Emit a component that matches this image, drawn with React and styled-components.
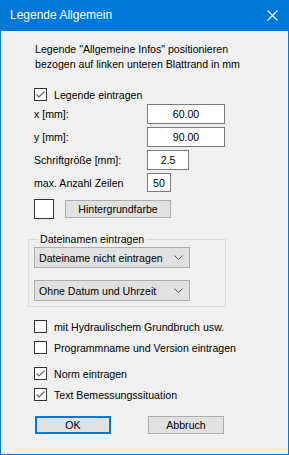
import React, { useState } from 'react';
import styled, { createGlobalStyle } from 'styled-components';

const GlobalStyle = createGlobalStyle`
    html, body {
        margin: 0;
        padding: 0;
        background: #f0f0f0;
    }
    * {
        box-sizing: border-box;
    }
`;

const Window = styled.div`
    width: 289px;
    height: 455px;
    border: 1px solid #0078d7;
    border-top: none;
    background: #f0f0f0;
    font-family: "Liberation Sans", Arial, sans-serif;
    font-size: 10.6px;
    color: #000;
    display: flex;
    flex-direction: column;
`;

const TitleBar = styled.div`
    height: 31px;
    margin: 0 -1px;
    background: #0078d7;
    color: #fff;
    display: flex;
    align-items: center;
    justify-content: space-between;
    padding: 0 10px 1px 10px;
    font-size: 12px;
`;

const CloseBtn = styled.svg`
    width: 11px;
    height: 11px;
    margin-right: 1px;
`;

const Body = styled.div`
    padding: 11px 0 0 33px;
    display: flex;
    flex-direction: column;
    align-items: flex-start;
`;

const Intro = styled.div`
    line-height: 15px;
    padding-left: 1px;
`;

const Row = styled.div`
    display: flex;
    align-items: center;
    height: ${(p) => p.$h || 20}px;
    margin-top: ${(p) => p.$mt || 0}px;
`;

const Label = styled.span`
    width: 113px;
`;

const Field = styled.input`
    width: ${(p) => p.$w}px;
    height: ${(p) => p.$h || 20}px;
    border: 1px solid #7a7a7a;
    background: #fff;
    font: inherit;
    color: #000;
    text-align: center;
    padding: 0;
    outline: none;
`;

const CheckLabel = styled.label`
    display: flex;
    align-items: center;
    gap: 7px;
    height: 13px;
    margin-top: ${(p) => p.$mt || 0}px;
`;

const Box = styled.span`
    width: 13px;
    height: 13px;
    border: 1px solid #333;
    background: #fff;
    display: flex;
    align-items: center;
    justify-content: center;
`;

const Swatch = styled.div`
    width: 20px;
    height: 20px;
    border: 1px solid #333;
    background: #fff;
`;

const Button = styled.button`
    width: ${(p) => p.$w}px;
    height: ${(p) => p.$h || 18}px;
    margin-left: ${(p) => p.$ml || 0}px;
    background: #e1e1e1;
    border: ${(p) => (p.$default ? '2px solid #0078d7' : '1px solid #adadad')};
    font: inherit;
    color: #000;
    padding: 0;
`;

const Group = styled.div`
    position: relative;
    margin: 20px 0 0 -6px;
    width: 198px;
    border: 1px solid #dcdcdc;
    padding: 7px 0 5px 5px;
    display: flex;
    flex-direction: column;
    gap: 12px;
`;

const GroupTitle = styled.span`
    position: absolute;
    top: -8px;
    left: 9px;
    background: #f0f0f0;
    padding: 0 2px;
    line-height: 14px;
`;

const Select = styled.div`
    width: 156px;
    height: 21px;
    background: #e1e1e1;
    border: 1px solid #adadad;
    display: flex;
    align-items: center;
    justify-content: space-between;
    padding: 0 6px 0 4px;
`;

const ButtonRow = styled.div`
    display: flex;
    margin-top: 15px;
    margin-left: 1px;
`;

function Check({ checked, label, mt }) {
    return (
        <CheckLabel $mt={mt}>
            <Box>
                {checked && (
                    <svg width="11" height="11" viewBox="0 0 11 11">
                        <path d="M1.5 5.5 L4 8 L9.5 2.5" fill="none" stroke="#666" strokeWidth="1.2" />
                    </svg>
                )}
            </Box>
            <span>{label}</span>
        </CheckLabel>
    );
}

function Dropdown({ text }) {
    return (
        <Select>
            <span>{text}</span>
            <svg width="9" height="6" viewBox="0 0 9 6">
                <path d="M0.5 0.5 L4.5 4.5 L8.5 0.5" fill="none" stroke="#555" strokeWidth="1" />
            </svg>
        </Select>
    );
}

export default function App() {
    const [x, setX] = useState('60.00');
    const [y, setY] = useState('90.00');
    const [size, setSize] = useState('2.5');
    const [rows, setRows] = useState('50');

    return (
        <Window>
            <GlobalStyle />
            <TitleBar>
                <span>Legende Allgemein</span>
                <CloseBtn viewBox="0 0 11 11">
                    <path d="M0.5 0.5 L10.5 10.5 M10.5 0.5 L0.5 10.5" stroke="#fff" strokeWidth="1.1" />
                </CloseBtn>
            </TitleBar>
            <Body>
                <Intro>
                    Legende "Allgemeine Infos" positionieren
                    <br />
                    bezogen auf linken unteren Blattrand in mm
                </Intro>
                <Check checked label="Legende eintragen" mt={16} />
                <Row $mt={3}>
                    <Label>x [mm]:</Label>
                    <Field $w={78} value={x} onChange={(e) => setX(e.target.value)} />
                </Row>
                <Row $mt={3}>
                    <Label>y [mm]:</Label>
                    <Field $w={78} value={y} onChange={(e) => setY(e.target.value)} />
                </Row>
                <Row $mt={3}>
                    <Label>Schriftgröße [mm]:</Label>
                    <Field $w={42} value={size} onChange={(e) => setSize(e.target.value)} />
                </Row>
                <Row $mt={3} $h={19}>
                    <Label>max. Anzahl Zeilen</Label>
                    <Field $w={24} $h={19} value={rows} onChange={(e) => setRows(e.target.value)} />
                </Row>
                <Row $mt={7}>
                    <Swatch />
                    <Button $w={106} $ml={11}>Hintergrundfarbe</Button>
                </Row>
                <Group>
                    <GroupTitle>Dateinamen eintragen</GroupTitle>
                    <Dropdown text="Dateiname nicht eintragen" />
                    <Dropdown text="Ohne Datum und Uhrzeit" />
                </Group>
                <Check label="mit Hydraulischem Grundbruch usw." mt={13} />
                <Check label="Programmname und Version eintragen" mt={8} />
                <Check checked label="Norm eintragen" mt={13} />
                <Check checked label="Text Bemessungssituation" mt={8} />
                <ButtonRow>
                    <Button $w={76} $default>OK</Button>
                    <Button $w={76} $ml={37}>Abbruch</Button>
                </ButtonRow>
            </Body>
        </Window>
    );
}
